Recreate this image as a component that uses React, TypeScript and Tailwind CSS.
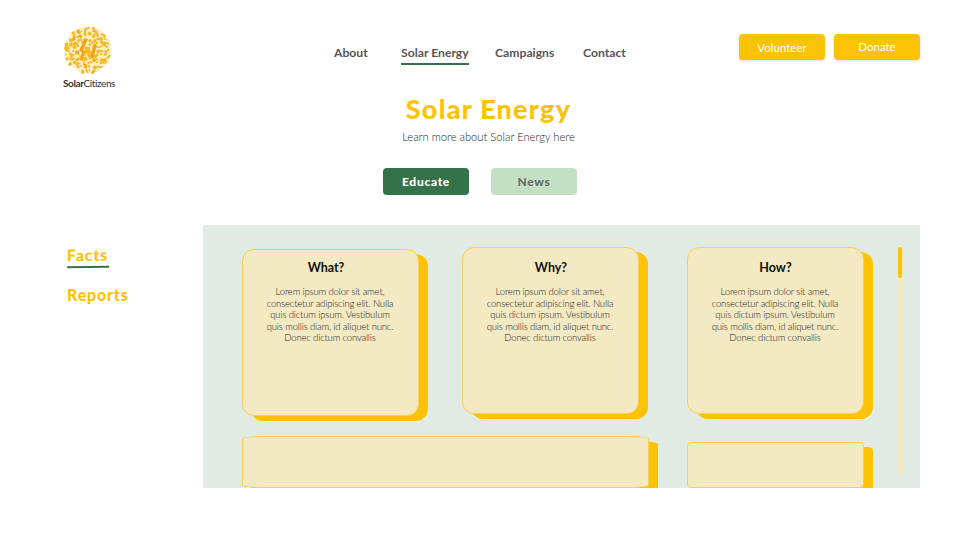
const LOGO: [number, number, number, number, number][] = (() => {
  const out: [number, number, number, number, number][] = [];
  let seed = 23;
  const rnd = () => {
    seed = (seed * 16807) % 2147483647;
    return seed / 2147483647;
  };
  for (let y = 2; y < 48; y += 3.9) {
    for (let x = 2; x < 48; x += 3.9) {
      const jx = x + rnd() * 2.4 - 1.2;
      const jy = y + rnd() * 2.4 - 1.2;
      const d = Math.hypot(jx - 24, jy - 24);
      if (d < 22.8) out.push([jx - 1.5, jy - 1.5, 1.2 + rnd() * 3.2, 1.2 + rnd() * 3.2, rnd() * 90]);
    }
  }
  return out;
})();

function Logo() {
  return (
    <div className="flex flex-col items-center w-[54px]">
      <svg width="48" height="48" viewBox="0 0 48 48" className="block -ml-[2px]">
        <circle cx="24" cy="24" r="23.5" fill="#fdeec4" />
        {LOGO.map(([x, y, w, h, r], i) => (
          <rect
            key={i}
            x={x}
            y={y}
            width={w}
            height={h}
            rx="0.3"
            fill={i % 4 === 0 ? "#f2a91a" : "#f8b924"}
            transform={`rotate(${r} ${x + w / 2} ${y + h / 2})`}
          />
        ))}
        <path d="M21 12l3 1-5 11 3 1-4 9-2-1 2-7-3-1zM30 17l3 2-4 14-3-2z" fill="#f0a412" />
      </svg>
      <div className="mt-[3px] text-[10px] leading-[12px] tracking-[-0.4px] text-[#333] whitespace-nowrap">
        <span className="font-bold">Solar</span>
        <span>Citizens</span>
      </div>
    </div>
  );
}

const LOREM = [
  "Lorem ipsum dolor sit amet,",
  "consectetur adipiscing elit. Nulla",
  "quis dictum ipsum. Vestibulum",
  "quis mollis diam, id aliquet nunc.",
  "Donec dictum convallis",
];

function Card({ title, className, titleClass }: { title: string; className: string; titleClass: string }) {
  return (
    <div
      className={`w-[177px] h-[167px] shrink-0 rounded-[12px] border border-[#f7cf55] bg-[#f3e9c2] shadow-[9px_5px_0_0_#fcc306] text-center ${className}`}
    >
      <h3 className={`text-[12.5px] leading-[16px] font-bold text-[#111] ${titleClass}`}>{title}</h3>
      <p className="mt-[10px] pr-[1px] text-[9.5px] leading-[11.5px] font-light tracking-[-0.15px] text-[#222]">
        {LOREM.map((l) => (
          <span key={l} className="block">
            {l}
          </span>
        ))}
      </p>
    </div>
  );
}

export default function App() {
  return (
    <div className="w-[960px] h-[540px] bg-white overflow-hidden font-['Lato',sans-serif]">
      <header className="flex items-start h-[92px]">
        <div className="ml-[62px] mt-[26px]">
          <Logo />
        </div>
        <nav className="ml-[218px] mt-[45px] flex items-start text-[12.2px] leading-[16px] font-bold text-[#555]">
          <a className="w-[67px]">About</a>
          <a className="w-[94px]">
            <span className="block w-[68px] whitespace-nowrap border-b-[2px] border-[#34734a] pb-[2px]">Solar Energy</span>
          </a>
          <a className="w-[88px]">Campaigns</a>
          <a>Contact</a>
        </nav>
        <div className="ml-auto mr-[40px] mt-[34px] flex gap-[9px] text-[11.5px] text-white">
          <button className="w-[86px] h-[26px] rounded-[4px] bg-[#fcc306] pt-[2px] shadow-[0_1px_3px_rgba(0,0,0,0.15)]">Volunteer</button>
          <button className="w-[86px] h-[26px] rounded-[4px] bg-[#fcc306] shadow-[0_1px_3px_rgba(0,0,0,0.15)]">Donate</button>
        </div>
      </header>

      <section className="flex flex-col items-center ml-[17px]">
        <h1 className="text-[27px] leading-[34px] font-black tracking-[1.2px] text-[#fcc306]">Solar Energy</h1>
        <p className="mt-[3px] text-[11.2px] leading-[16px] font-light text-[#222]">Learn more about Solar Energy here</p>
        <div className="mt-[23px] flex gap-[22px] -ml-[17px] text-[12px] font-black tracking-[0.7px]">
          <button className="w-[86px] h-[27px] rounded-[4px] bg-[#347249] text-white">Educate</button>
          <button className="w-[86px] h-[27px] rounded-[4px] bg-[#c2e0c4] text-[#6b6b6b]">News</button>
        </div>
      </section>

      <main className="mt-[30px] flex items-start">
        <aside className="ml-[67px] w-[136px] pt-[20px] text-[16px] font-black leading-[20px] tracking-[0.8px] text-[#fcc306]">
          <div className="w-[42px] border-b-[2px] border-[#34734a] pb-[1px] -rotate-1">Facts</div>
          <div className="mt-[17px]">Reports</div>
        </aside>

        <div className="w-[717px] h-[263px] bg-[#e1ebe3] overflow-hidden flex items-start">
          <div className="w-[694px] shrink-0">
            <div className="flex items-start">
              <Card title="What?" className="ml-[39px] mt-[24px] pt-[10px]" titleClass="pr-[9px]" />
              <Card title="Why?" className="ml-[43px] mt-[22px] pt-[12px]" titleClass="pl-[1px]" />
              <Card title="How?" className="ml-[48px] mt-[22px] pt-[12px]" titleClass="" />
            </div>
            <div className="flex items-start">
              <div className="ml-[39px] mt-[20px] w-[407px] h-[52px] shrink-0 rounded-[20px/3px] border border-[#f7cf55] bg-[#f3e9c2] shadow-[9px_5px_0_0_#fcc306]" />
              <div className="ml-[38px] mt-[26px] w-[177px] h-[46px] shrink-0 rounded-[4px] border border-[#f7cf55] bg-[#f3e9c2] shadow-[9px_5px_0_0_#fcc306]" />
            </div>
          </div>
          <div className="mt-[22px] w-[6px] h-[228px] rounded-full bg-[#f3e9c2] flex justify-center shrink-0">
            <div className="w-[4px] h-[31px] rounded-full bg-[#fcc306]" />
          </div>
        </div>
      </main>
    </div>
  );
}
